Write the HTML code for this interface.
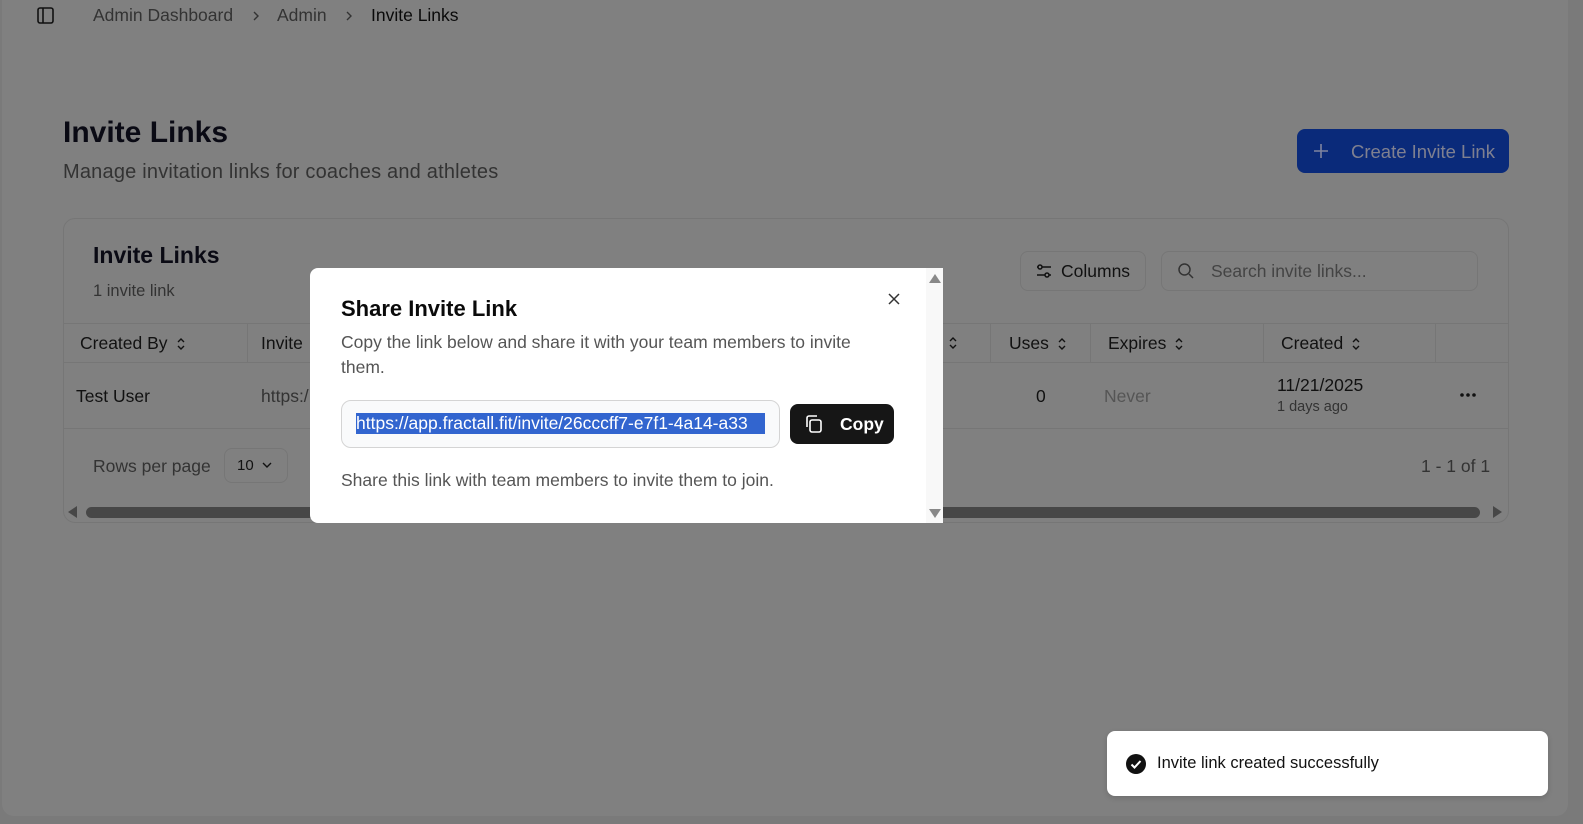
<!DOCTYPE html>
<html><head><meta charset="utf-8"><style>
*{box-sizing:border-box;margin:0;padding:0}
body{width:1583px;height:824px;background:#7a7a7a;font-family:"Liberation Sans",sans-serif;position:relative;overflow:hidden;color:#0a0a0a}
.page{position:absolute;left:2px;top:0;width:1566px;height:816px;background:#808080;border-radius:0 0 12px 12px}
.a{position:absolute;white-space:nowrap}
.card{position:absolute;left:63px;top:218px;width:1446px;height:305px;border:1px solid #767676;border-radius:12px}
.hl{position:absolute;height:1px;background:#767676}
.vl{position:absolute;width:1px;background:#767676}
.modal{position:absolute;left:310px;top:268px;width:633px;height:255px;background:#fff;border-radius:8px 0 0 8px;overflow:hidden}
.sb{position:absolute;right:0;top:0;width:17px;height:255px;background:#f8f8f8}
.toast{position:absolute;left:1107px;top:731px;width:441px;height:65px;background:#fff;border-radius:8px;box-shadow:0 2px 6px rgba(0,0,0,.15)}
.s{display:inline-block;vertical-align:middle;margin-left:8px}
</style></head><body>
<div class="page"></div>
<svg class="a" style="left:37px;top:7px" width="17" height="17" viewBox="0 0 17 17" fill="none" stroke="#111" stroke-width="1.6"><rect x="1" y="1" width="15" height="15" rx="2"/><path d="M6 1v15"/></svg>
<div class="a" style="left:93px;top:5px;font-size:17.5px;color:#333">Admin Dashboard</div>
<svg class="a" style="left:251px;top:10px" width="10" height="12" viewBox="0 0 10 12" fill="none" stroke="#333" stroke-width="1.4"><path d="M3 2l4 4-4 4"/></svg>
<div class="a" style="left:277px;top:5px;font-size:17.5px;color:#333">Admin</div>
<svg class="a" style="left:344px;top:10px" width="10" height="12" viewBox="0 0 10 12" fill="none" stroke="#333" stroke-width="1.4"><path d="M3 2l4 4-4 4"/></svg>
<div class="a" style="left:371px;top:5px;font-size:17.5px;color:#0a0a0a">Invite Links</div>
<div class="a" style="left:63px;top:116px;font-size:30px;font-weight:bold;color:#0a0a14">Invite Links</div>
<div class="a" style="left:63px;top:161px;font-size:20px;color:#333;letter-spacing:.2px">Manage invitation links for coaches and athletes</div>
<div class="a" style="left:1297px;top:129px;width:212px;height:44px;background:#0a2a7a;border-radius:8px"></div>
<svg class="a" style="left:1312px;top:142px" width="18" height="18" viewBox="0 0 18 18" stroke="#7f85a0" stroke-width="1.6"><path d="M9 2v14M2 9h14"/></svg>
<div class="a" style="left:1351px;top:141px;font-size:18.5px;color:#7f8090">Create Invite Link</div>
<div class="card"></div>
<div class="a" style="left:93px;top:242px;font-size:23px;font-weight:bold;color:#0a0a14">Invite Links</div>
<div class="a" style="left:93px;top:282px;font-size:16.5px;color:#333">1 invite link</div>
<div class="a" style="left:1020px;top:251px;width:126px;height:40px;border:1px solid #767676;border-radius:8px"></div>
<svg class="a" style="left:1035px;top:262px" width="18" height="18" viewBox="0 0 18 18" fill="none" stroke="#111" stroke-width="1.5"><path d="M2 5h14M2 13h14"/><circle cx="5" cy="5" r="2" fill="#808080"/><circle cx="12" cy="13" r="2" fill="#808080"/></svg>
<div class="a" style="left:1061px;top:261px;font-size:17.5px;color:#111">Columns</div>
<div class="a" style="left:1161px;top:251px;width:317px;height:40px;border:1px solid #767676;border-radius:8px"></div>
<svg class="a" style="left:1177px;top:262px" width="18" height="18" viewBox="0 0 18 18" fill="none" stroke="#333" stroke-width="1.5"><circle cx="7.5" cy="7.5" r="5.5"/><path d="M12 12l4 4"/></svg>
<div class="a" style="left:1211px;top:261px;font-size:17.5px;color:#444">Search invite links...</div>
<div class="hl" style="left:64px;top:323px;width:1444px"></div>
<div class="hl" style="left:64px;top:362px;width:1444px"></div>
<div class="hl" style="left:64px;top:428px;width:1444px"></div>
<div class="vl" style="left:247px;top:323px;height:39px"></div>
<div class="vl" style="left:990px;top:323px;height:39px"></div>
<div class="vl" style="left:1090px;top:323px;height:39px"></div>
<div class="vl" style="left:1263px;top:323px;height:39px"></div>
<div class="vl" style="left:1435px;top:323px;height:39px"></div>
<div class="a" style="left:80px;top:333px;font-size:17.5px;color:#111">Created By<svg class="s" width="10" height="14" viewBox="0 0 10 14" fill="none" stroke="#111" stroke-width="1.4"><path d="M2 5l3-3 3 3M2 9l3 3 3-3"/></svg></div>
<div class="a" style="left:261px;top:333px;font-size:17.5px;color:#111">Invite</div>
<svg class="a" style="left:948px;top:336px" width="10" height="14" viewBox="0 0 10 14" fill="none" stroke="#111" stroke-width="1.4"><path d="M2 5l3-3 3 3M2 9l3 3 3-3"/></svg>
<div class="a" style="left:1009px;top:333px;font-size:17.5px;color:#111">Uses<svg class="s" width="10" height="14" viewBox="0 0 10 14" fill="none" stroke="#111" stroke-width="1.4"><path d="M2 5l3-3 3 3M2 9l3 3 3-3"/></svg></div>
<div class="a" style="left:1108px;top:333px;font-size:17.5px;color:#111">Expires<svg class="s" width="10" height="14" viewBox="0 0 10 14" fill="none" stroke="#111" stroke-width="1.4"><path d="M2 5l3-3 3 3M2 9l3 3 3-3"/></svg></div>
<div class="a" style="left:1281px;top:333px;font-size:17.5px;color:#111">Created<svg class="s" width="10" height="14" viewBox="0 0 10 14" fill="none" stroke="#111" stroke-width="1.4"><path d="M2 5l3-3 3 3M2 9l3 3 3-3"/></svg></div>
<div class="a" style="left:76px;top:386px;font-size:17.5px;color:#111">Test User</div>
<div class="a" style="left:261px;top:386px;font-size:17.5px;color:#333">https:/</div>
<div class="a" style="left:1036px;top:386px;font-size:17.5px;color:#111">0</div>
<div class="a" style="left:1104px;top:386px;font-size:17.5px;color:#555">Never</div>
<div class="a" style="left:1277px;top:375px;font-size:17.5px;color:#111">11/21/2025</div>
<div class="a" style="left:1277px;top:399px;font-size:14.5px;color:#333">1 days ago</div>
<svg class="a" style="left:1459px;top:392px" width="18" height="6" viewBox="0 0 18 6" fill="#111"><circle cx="3" cy="3" r="1.8"/><circle cx="9" cy="3" r="1.8"/><circle cx="15" cy="3" r="1.8"/></svg>
<div class="a" style="left:93px;top:456px;font-size:17.5px;color:#333">Rows per page</div>
<div class="a" style="left:224px;top:448px;width:64px;height:35px;border:1px solid #767676;border-radius:8px"></div>
<div class="a" style="left:237px;top:457px;font-size:15px;color:#111">10</div>
<svg class="a" style="left:261px;top:461px" width="12" height="8" viewBox="0 0 12 8" fill="none" stroke="#111" stroke-width="1.4"><path d="M2 2l4 4 4-4"/></svg>
<div class="a" style="left:1421px;top:456px;font-size:17.5px;color:#333">1 - 1 of 1</div>
<div class="a" style="left:86px;top:507px;width:1394px;height:11px;border-radius:6px;background:#474747"></div>
<div class="a" style="left:68px;top:506px;width:0;height:0;border-top:6px solid transparent;border-bottom:6px solid transparent;border-right:9px solid #474747"></div>
<div class="a" style="left:1493px;top:506px;width:0;height:0;border-top:6px solid transparent;border-bottom:6px solid transparent;border-left:9px solid #474747"></div>
<div class="modal">
 <div class="sb"></div>
 <div class="a" style="left:619px;top:6px;width:0;height:0;border-left:6px solid transparent;border-right:6px solid transparent;border-bottom:9px solid #888"></div>
 <div class="a" style="left:619px;top:241px;width:0;height:0;border-left:6px solid transparent;border-right:6px solid transparent;border-top:9px solid #888"></div>
 <svg class="a" style="left:577px;top:24px" width="14" height="14" viewBox="0 0 14 14" stroke="#333" stroke-width="1.5"><path d="M2 2l10 10M12 2L2 12"/></svg>
 <div class="a" style="left:31px;top:28px;font-size:22px;font-weight:bold;color:#0a0a0a">Share Invite Link</div>
 <div class="a" style="left:31px;top:62px;font-size:17.5px;color:#555;line-height:25px;white-space:normal;width:540px">Copy the link below and share it with your team members to invite them.</div>
 <div class="a" style="left:31px;top:132px;width:439px;height:48px;border:1.5px solid #d4d4d4;border-radius:10px;background:#f9fafb;overflow:hidden">
  <div class="a" style="left:14px;top:12px;width:409px;overflow:hidden;font-size:17.5px;line-height:21px;color:#fff;background:#3265cf">https://app.fractall.fit/invite/26cccff7-e7f1-4a14-a33</div>
 </div>
 <div class="a" style="left:480px;top:136px;width:104px;height:40px;background:#161616;border-radius:8px"></div>
 <svg class="a" style="left:494px;top:146px" width="20" height="20" viewBox="0 0 20 20" fill="none" stroke="#fff" stroke-width="1.6"><rect x="6" y="6" width="11" height="12" rx="2"/><path d="M3 13V4a2 2 0 0 1 2-2h8"/></svg>
 <div class="a" style="left:530px;top:146px;font-size:17.5px;font-weight:bold;color:#fff">Copy</div>
 <div class="a" style="left:31px;top:202px;font-size:17.5px;color:#555">Share this link with team members to invite them to join.</div>
</div>
<div class="toast">
 <svg class="a" style="left:19px;top:23px" width="20" height="20" viewBox="0 0 20 20"><circle cx="10" cy="10" r="10" fill="#111"/><path d="M5.5 10.5l3 3 6-6.5" fill="none" stroke="#fff" stroke-width="2"/></svg>
 <div class="a" style="left:50px;top:23px;font-size:16.5px;color:#111">Invite link created successfully</div>
</div>
</body></html>
